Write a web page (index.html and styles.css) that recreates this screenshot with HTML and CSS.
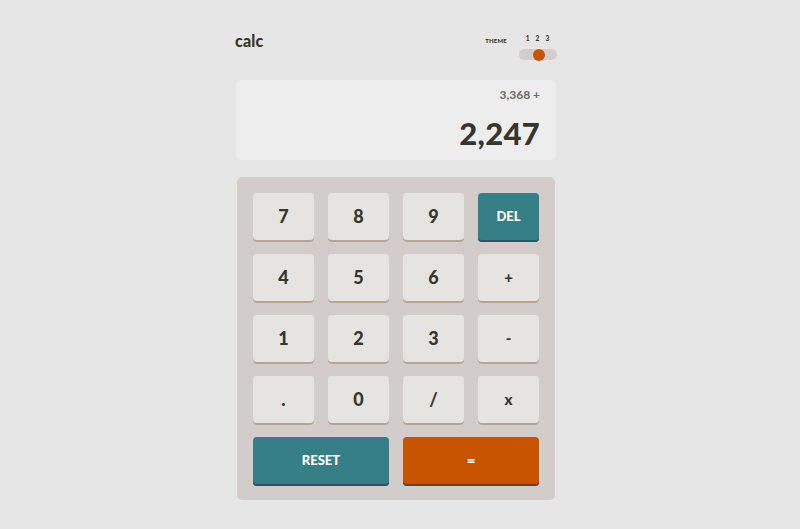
FILE: index.html
```html
<!DOCTYPE html>
<html>
<head>
<meta charset="utf-8">
<link rel="stylesheet" href="styles.css">
</head>
<body>
<main class="calc">
  <header class="top">
    <h1 class="logo">calc</h1>
    <div class="theme">
      <span class="theme-label">THEME</span>
      <div class="switch">
        <div class="nums"><span>1</span><span>2</span><span>3</span></div>
        <div class="track"><span class="knob"></span></div>
      </div>
    </div>
  </header>
  <section class="screen">
    <div class="prev">3,368 +</div>
    <div class="current">2,247</div>
  </section>
  <section class="pad">
    <button class="key">7</button>
    <button class="key">8</button>
    <button class="key">9</button>
    <button class="key key-blue">DEL</button>
    <button class="key">4</button>
    <button class="key">5</button>
    <button class="key">6</button>
    <button class="key key-op">+</button>
    <button class="key">1</button>
    <button class="key">2</button>
    <button class="key">3</button>
    <button class="key key-op">-</button>
    <button class="key">.</button>
    <button class="key">0</button>
    <button class="key">/</button>
    <button class="key key-op">x</button>
    <button class="key key-blue key-wide">RESET</button>
    <button class="key key-orange key-wide">=</button>
  </section>
</main>
</body>
</html>
```
FILE: styles.css
```css
html, body {
  margin: 0;
  padding: 0;
  background: #e6e6e6;
}
body {
  font-family: "Lato", "Inter", sans-serif;
  color: #36362c;
  padding-right: 8px;
}
.calc {
  width: 320px;
  margin: 0 auto;
  padding-top: 28px;
}
.top {
  display: flex;
  justify-content: space-between;
  align-items: flex-end;
  height: 32px;
}
.logo {
  margin: 0 0 0 -1px;
  font-size: 16px;
  font-weight: 900;
  line-height: 1;
  padding-bottom: 11px;
  letter-spacing: 0.2px;
}
.theme {
  display: flex;
  align-items: flex-end;
  gap: 12px;
  margin-right: -1px;
}
.theme-label {
  font-size: 6px;
  font-weight: 900;
  letter-spacing: 0.2px;
  padding-bottom: 16px;
}
.switch {
  display: flex;
  flex-direction: column;
  align-items: center;
  gap: 7px;
}
.nums {
  display: flex;
  gap: 6px;
  font-size: 6.5px;
  font-weight: 900;
  line-height: 7px;
  padding-right: 1px;
}
.track {
  width: 38px;
  height: 11px;
  border-radius: 6px;
  background: #d3cdcd;
  position: relative;
}
.knob {
  position: absolute;
  left: 13.5px;
  top: -0.5px;
  width: 12px;
  height: 12px;
  border-radius: 50%;
  background: #c85402;
}
.screen {
  margin-top: 20px;
  background: #ededed;
  border-radius: 6px;
  height: 80px;
  box-sizing: border-box;
  padding: 8px 16px 0 16px;
  text-align: right;
}
.prev {
  font-size: 12px;
  font-weight: 700;
  color: #6b6b63;
  line-height: 14px;
}
.current {
  font-size: 31px;
  font-weight: 900;
  line-height: 40px;
  margin-top: 11px;
  letter-spacing: 0.3px;
}
.pad {
  margin: 17px 1px 0 1px;
  background: #d2cdcb;
  border-radius: 5px;
  padding: 16px 16px 14px 16px;
  display: grid;
  grid-template-columns: repeat(4, 61px);
  column-gap: 14px;
  row-gap: 12.5px;
}
.key {
  height: 48.5px;
  border: none;
  border-radius: 4px;
  background: #e6e4e1;
  box-shadow: inset 0 -2px 0 #b4a597;
  font-family: "Lato", "Inter", sans-serif;
  font-size: 18px;
  font-weight: 900;
  color: #36362c;
  padding: 0 0 2px 0;
  cursor: pointer;
}
.key-op {
  font-size: 15px;
}
.key-blue {
  background: #377f86;
  box-shadow: inset 0 -2px 0 #1b5f65;
  color: #ffffff;
  font-size: 13px;
}
.key-orange {
  background: #c85402;
  box-shadow: inset 0 -2px 0 #873901;
  color: #ffffff;
  font-size: 15px;
}
.key-wide {
  grid-column: span 2;
}
```
